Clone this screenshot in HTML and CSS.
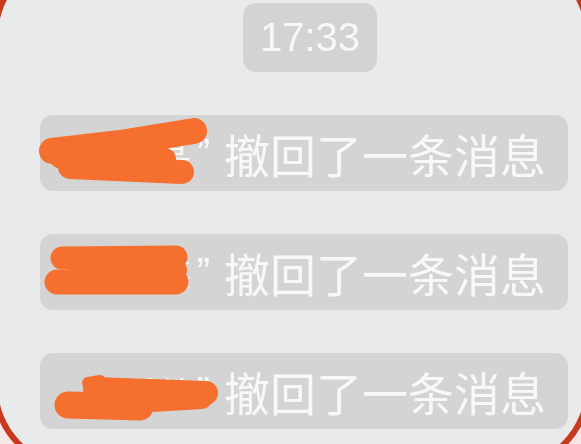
FILE: index.html
```html
<!DOCTYPE html>
<html lang="zh-CN">
<head>
<meta charset="utf-8">
<title>撤回消息</title>
<link rel="stylesheet" href="styles.css">
</head>
<body>
<div class="frame">
  <div class="time-pill"><span class="time">17:33</span></div>
  <div class="bubble">
    <span class="name">“某某</span><span class="quote">”</span><span class="msg">撤回了一条消息</span>
    <svg class="scribble" viewBox="0 0 528 76" aria-hidden="true">
      <path d="M12 36 L80 28 L154 16" class="s" stroke-width="26"/>
      <path d="M30 52 L142 57" class="s" stroke-width="24"/>
      <path d="M20 42 L125 44" class="s" stroke-width="22"/>
    </svg>
  </div>
  <div class="bubble">
    <span class="name">“某某</span><span class="quote">”</span><span class="msg">撤回了一条消息</span>
    <svg class="scribble" viewBox="0 0 528 76" aria-hidden="true">
      <path d="M22 24 L136 23" class="s" stroke-width="23"/>
      <path d="M17 48 L136 48" class="s" stroke-width="25"/>
      <path d="M40 36 L136 36" class="s" stroke-width="22"/>
    </svg>
  </div>
  <div class="bubble">
    <span class="name">“某某</span><span class="quote">”</span><span class="msg">撤回了一条消息</span>
    <svg class="scribble" viewBox="0 0 528 76" aria-hidden="true">
      <path d="M55 36 L166 40" class="s" stroke-width="24"/>
      <path d="M28 52 L100 54" class="s" stroke-width="27"/>
      <path d="M95 50 L162 46" class="s" stroke-width="20"/>
      <path d="M48 30 L60 28" class="s" stroke-width="12"/>
    </svg>
  </div>
</div>
</body>
</html>
```

FILE: styles.css
```css
html, body {
  margin: 0;
  padding: 0;
  overflow: hidden;
  width: 581px;
  height: 444px;
}

body {
  background: #f6e8e7;
}

.frame {
  box-sizing: border-box;
  width: 599px;
  height: 517px;
  margin: -47px 0 0 -8px;
  padding-top: 44px;
  border: 6px solid #c8391f;
  border-radius: 83px;
  background: #e9eaea;
  display: flex;
  flex-direction: column;
  gap: 43px;
}

.time-pill {
  box-sizing: border-box;
  width: 134px;
  height: 69px;
  margin-left: 245px;
  flex-shrink: 0;
  border-radius: 13px;
  background: #d3d3d5;
  display: flex;
  align-items: center;
  justify-content: center;
}

.time {
  font-family: "Liberation Sans", Arial, sans-serif;
  font-size: 40px;
  color: #f7f7f8;
  filter: blur(0.5px);
}

.bubble {
  position: relative;
  box-sizing: border-box;
  width: 528px;
  height: 76px;
  margin-left: 42px;
  flex-shrink: 0;
  border-radius: 13px;
  background: #d4d4d5;
  display: flex;
  align-items: center;
  justify-content: flex-end;
  padding-right: 22px;
  color: #f8f8f8;
  white-space: nowrap;
}

.msg {
  font-family: "Noto Sans CJK SC", "Noto Sans", sans-serif;
  font-size: 46px;
  line-height: 1;
  flex-shrink: 0;
  filter: blur(0.5px);
}

.name {
  font-family: "Noto Sans CJK SC", "Noto Sans", sans-serif;
  font-size: 32px;
  line-height: 1;
  flex-shrink: 0;
  margin-right: 6px;
}

.quote {
  font-family: "Liberation Sans", Arial, sans-serif;
  font-size: 40px;
  line-height: 1;
  flex-shrink: 0;
  margin: 0 14px 0 0;
  filter: blur(0.5px);
}

.scribble {
  position: absolute;
  left: 0;
  top: 0;
  width: 528px;
  height: 76px;
  overflow: visible;
}

.s {
  fill: none;
  stroke: #f5702e;
  stroke-linecap: round;
  stroke-linejoin: round;
}
```
